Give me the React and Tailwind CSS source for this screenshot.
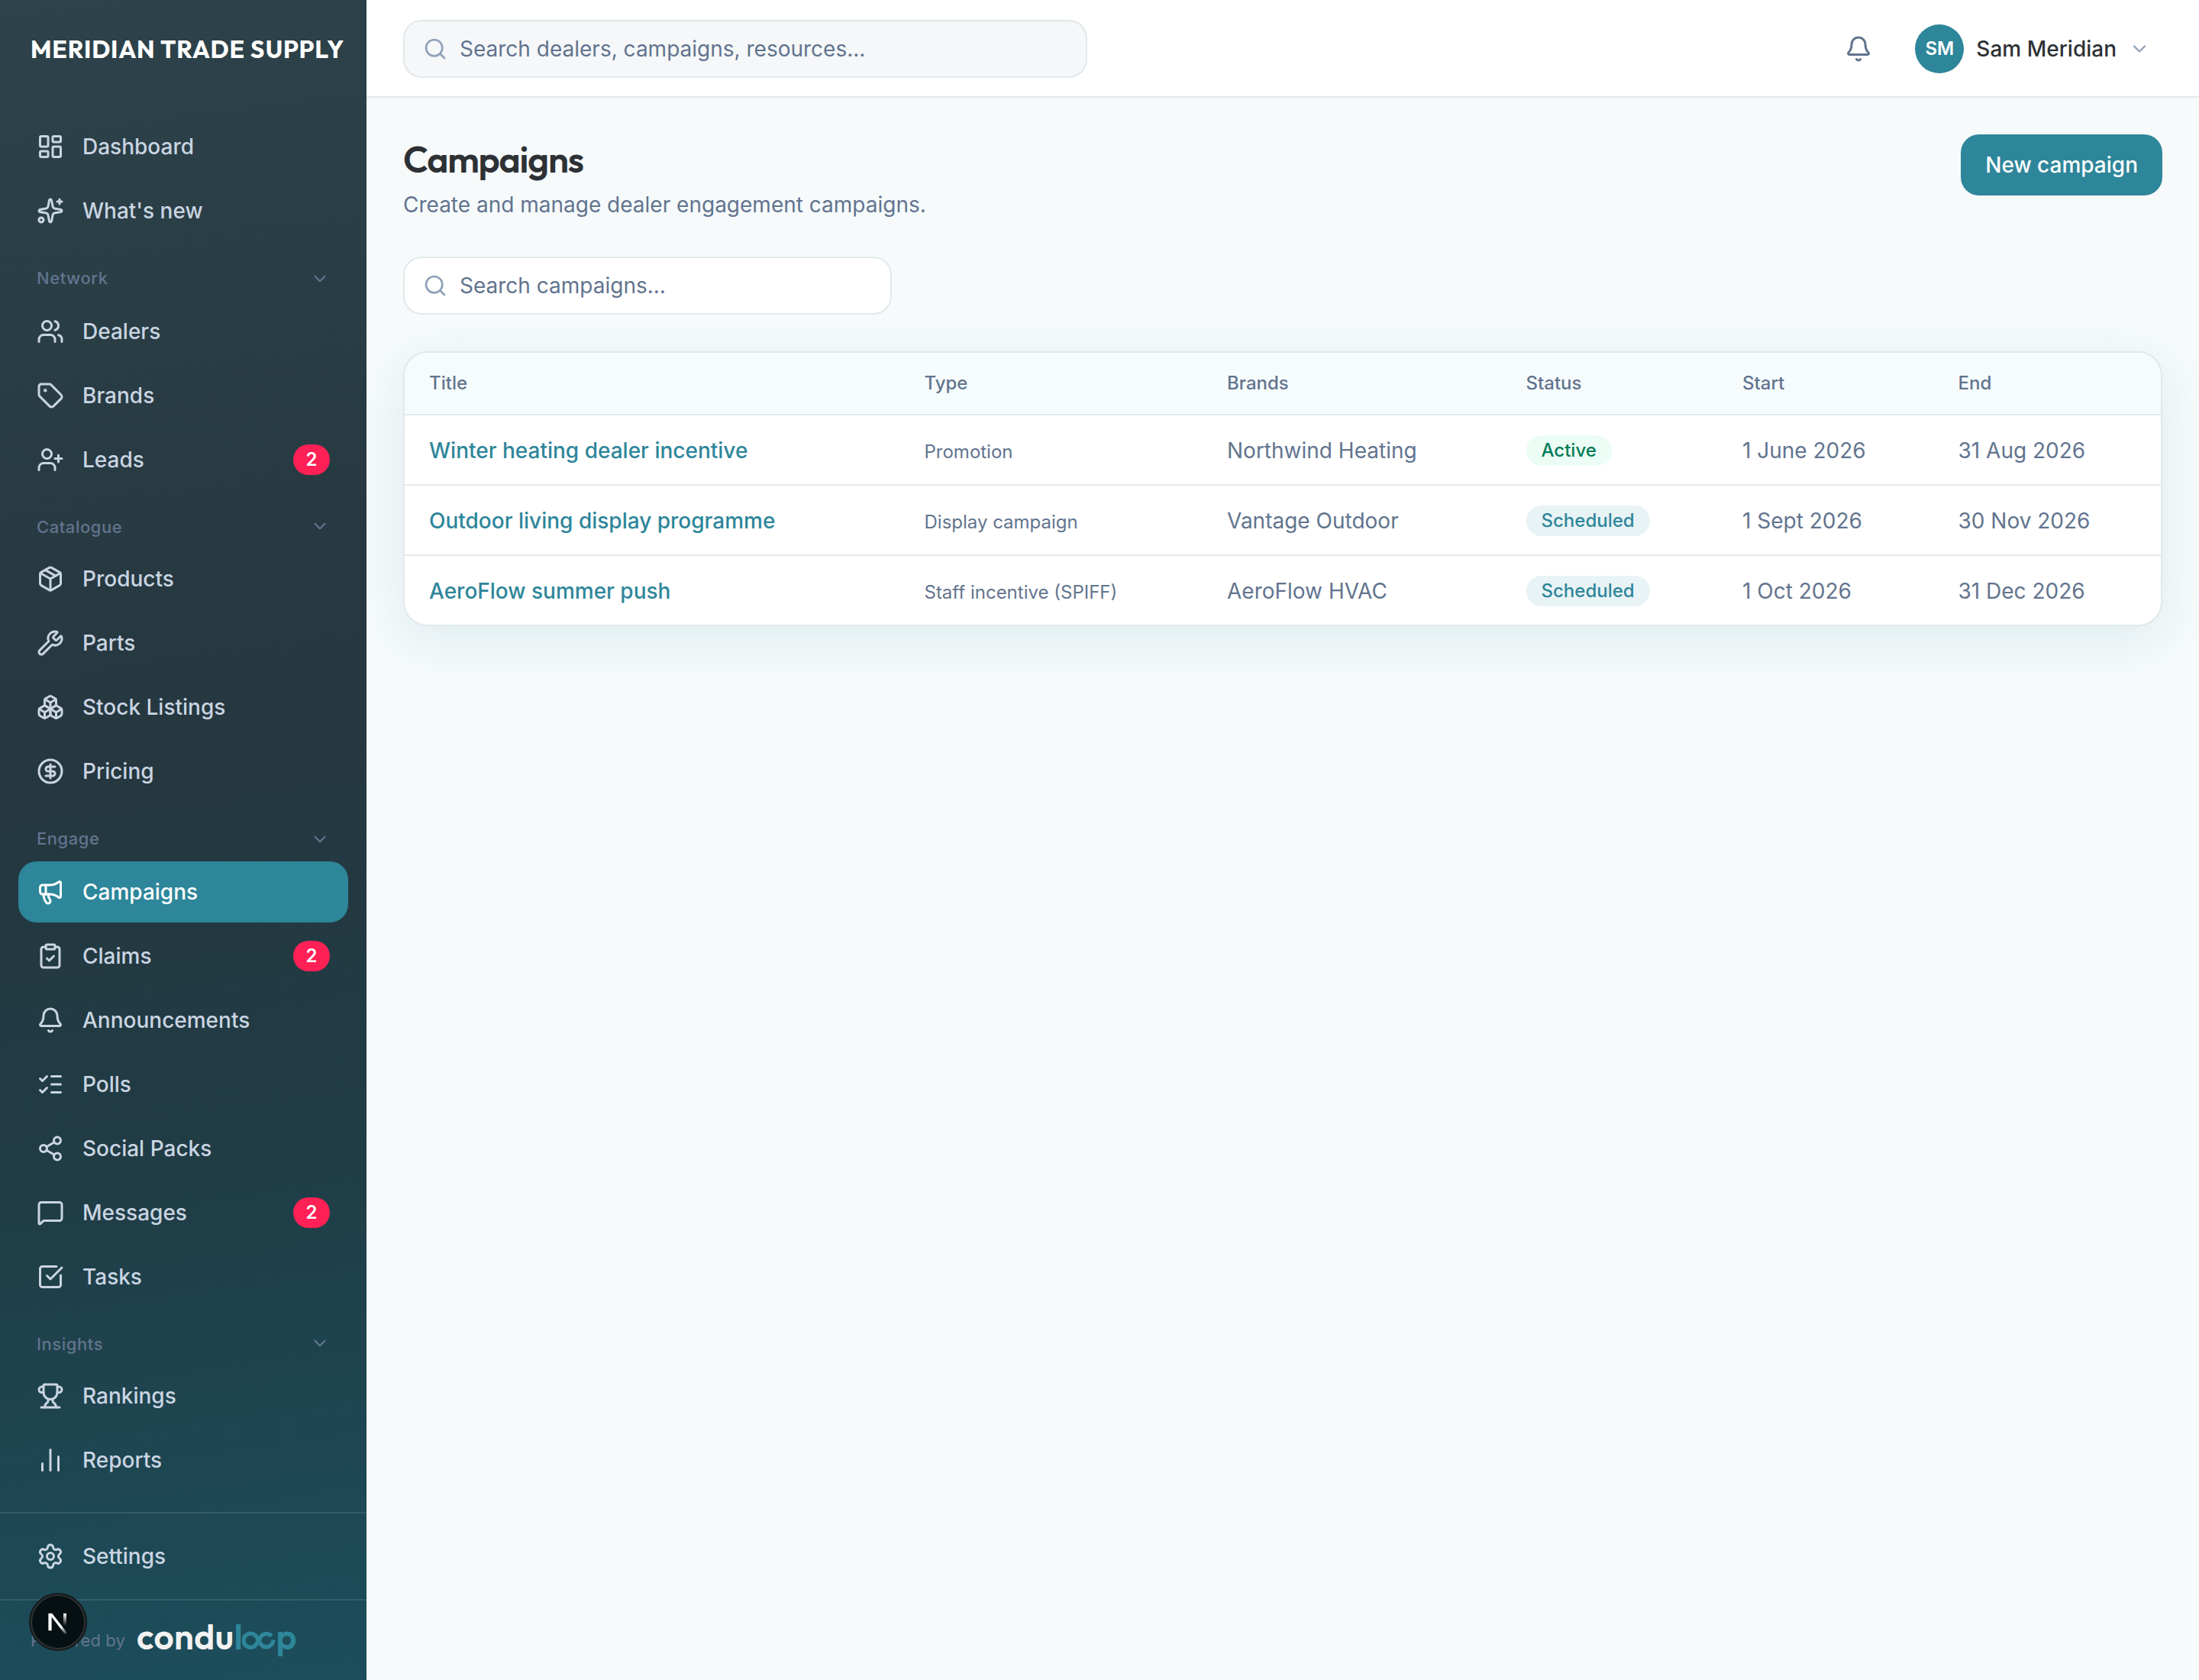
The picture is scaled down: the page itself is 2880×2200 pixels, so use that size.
import React from "react";
import {
  Bell,
  Boxes,
  ChartNoAxesColumn,
  ChevronDown,
  CircleDollarSign,
  ClipboardCheck,
  LayoutDashboard,
  ListChecks,
  Megaphone,
  MessageSquare,
  Package,
  Search,
  Settings,
  Share2,
  Sparkles,
  SquareCheckBig,
  Tag,
  Trophy,
  UserPlus,
  Users,
  Wrench,
} from "lucide-react";

const SECTIONS = [
  {
    items: [
      { label: "Dashboard", icon: LayoutDashboard },
      { label: "What's new", icon: Sparkles },
    ],
  },
  {
    title: "Network",
    header: "h-[78px] pt-[18px]",
    chevron: "translate-y-px",
    items: [
      { label: "Dealers", icon: Users },
      { label: "Brands", icon: Tag },
      { label: "Leads", icon: UserPlus, badge: 2 },
    ],
  },
  {
    title: "Catalogue",
    header: "h-[76px] pt-5",
    chevron: "-translate-y-px",
    items: [
      { label: "Products", icon: Package },
      { label: "Parts", icon: Wrench },
      { label: "Stock Listings", icon: Boxes },
      { label: "Pricing", icon: CircleDollarSign },
    ],
  },
  {
    title: "Engage",
    header: "h-[78px] pt-[18px]",
    chevron: "translate-y-px",
    items: [
      { label: "Campaigns", icon: Megaphone, active: true },
      { label: "Claims", icon: ClipboardCheck, badge: 2 },
      { label: "Announcements", icon: Bell },
      { label: "Polls", icon: ListChecks },
      { label: "Social Packs", icon: Share2 },
      { label: "Messages", icon: MessageSquare, badge: 2 },
      { label: "Tasks", icon: SquareCheckBig },
    ],
  },
  {
    title: "Insights",
    header: "h-[76px] pt-5",
    chevron: "-translate-y-px",
    items: [
      { label: "Rankings", icon: Trophy },
      { label: "Reports", icon: ChartNoAxesColumn },
    ],
  },
];

const CAMPAIGNS = [
  {
    title: "Winter heating dealer incentive",
    type: "Promotion",
    brand: "Northwind Heating",
    status: "Active",
    start: "1 June 2026",
    end: "31 Aug 2026",
  },
  {
    title: "Outdoor living display programme",
    type: "Display campaign",
    brand: "Vantage Outdoor",
    status: "Scheduled",
    start: "1 Sept 2026",
    end: "30 Nov 2026",
  },
  {
    title: "AeroFlow summer push",
    type: "Staff incentive (SPIFF)",
    brand: "AeroFlow HVAC",
    status: "Scheduled",
    start: "1 Oct 2026",
    end: "31 Dec 2026",
  },
];

const GRID = "grid grid-cols-[648.5px_396.5px_391.5px_283.5px_282.5px_1fr]";

const STATUS_STYLES = {
  Active: "bg-emerald-50 text-emerald-700",
  Scheduled: "bg-[#e8f3f5] text-[#2e869a]",
};

function NavItem({ label, icon: Icon, badge, active }) {
  return (
    <a
      className={
        "flex h-20 items-center gap-6 rounded-3xl px-6 text-[28px] leading-10 font-medium " +
        (active ? "bg-[#2e869a] text-white" : "text-slate-300")
      }
    >
      <Icon size={36} className="shrink-0" />
      <span className="flex-1">{label}</span>
      {badge && (
        <span className="flex h-10 w-12 items-center justify-center rounded-full bg-rose-500 text-2xl font-semibold text-white">
          {badge}
        </span>
      )}
    </a>
  );
}

function ConduloopLogo() {
  return (
    <span className="flex h-10 items-center font-['Outfit'] text-[46px] leading-10 font-semibold">
      <span className="-mt-2.5 tracking-[0.4px] text-[#f2f2f2]">condu</span>
      <span className="-mt-2.5 text-[#2e869a]">l</span>
      <svg
        width="44"
        height="40"
        viewBox="0 0 44 40"
        fill="none"
        stroke="#2e869a"
        strokeWidth="5.4"
        className="-ml-[0.4px]"
      >
        <path d="M38.6 14.4A9.1 9.1 0 0 0 25.4 14.4L18.2 26A9.1 9.1 0 1 1 18.2 14.4C20.4 17 23 23.4 25.4 26A9.1 9.1 0 0 0 40.9 19.4" />
      </svg>
      <span className="-mt-2.5 text-[#2e869a]">p</span>
    </span>
  );
}

function DevBadge() {
  return (
    <div className="absolute -top-[10px] left-[38px] flex size-[76px] items-center justify-center rounded-full border-2 border-[#171a1b] bg-[#060f11]">
      <div className="flex size-[72px] items-center justify-center rounded-full border-2 border-[#2c3335]">
        <svg width="40" height="40" viewBox="0 0 40 40" fill="none">
          <defs>
            <linearGradient id="stem" x1="0" y1="9" x2="0" y2="25" gradientUnits="userSpaceOnUse">
              <stop stopColor="#fff" />
              <stop offset="1" stopColor="#fff" stopOpacity="0" />
            </linearGradient>
            <linearGradient id="slash" x1="24" y1="26" x2="32" y2="37" gradientUnits="userSpaceOnUse">
              <stop stopColor="#fff" />
              <stop offset="1" stopColor="#fff" stopOpacity="0" />
            </linearGradient>
          </defs>
          <path d="M7.4 8.8H12.2L32.2 34.4L29.4 36.6L11.6 13.6V31.2H7.4Z" fill="url(#slash)" />
          <path d="M27 8.8H31V25H27Z" fill="url(#stem)" />
        </svg>
      </div>
    </div>
  );
}

function Sidebar() {
  return (
    <aside className="flex w-[480px] shrink-0 flex-col bg-[linear-gradient(172deg,#2d424a_0%,#25373f_45%,#203c45_68%,#1c4e5c_100%)]">
      <div className="flex h-32 items-center px-10 font-['Outfit'] text-[32px] font-bold tracking-wide whitespace-nowrap text-white">
        MERIDIAN TRADE SUPPLY
      </div>
      <nav className="flex-1 px-6 pt-6">
        {SECTIONS.map((section, i) => (
          <div key={i}>
            {section.title && (
              <div className={"flex items-center justify-between px-6 text-slate-500 " + section.header}>
                <span className="text-[22px] font-medium tracking-wide">{section.title}</span>
                <ChevronDown size={26} className={section.chevron} />
              </div>
            )}
            <div className="flex flex-col gap-1">
              {section.items.map((item) => (
                <NavItem key={item.label} {...item} />
              ))}
            </div>
          </div>
        ))}
      </nav>
      <div className="border-t-2 border-white/10 px-6 py-4">
        <NavItem label="Settings" icon={Settings} />
      </div>
      <div className="relative flex h-[106px] items-center gap-[15px] border-t-2 border-white/10 px-10">
        <span className="text-[22px] tracking-[0.1px] whitespace-nowrap text-slate-500">Powered by</span>
        <ConduloopLogo />
        <DevBadge />
      </div>
    </aside>
  );
}

function SearchBox({ placeholder, className }) {
  return (
    <div
      className={
        "flex h-[76px] items-center gap-4 rounded-3xl border-2 border-[#e2e8eb] px-6 text-[28px] text-slate-500 " +
        className
      }
    >
      <Search size={32} className="shrink-0 text-slate-400" />
      <span>{placeholder}</span>
    </div>
  );
}

function TopBar() {
  return (
    <header className="flex h-32 items-center border-b-2 border-[#e2e8eb] bg-white pt-0.5 pr-16 pl-12">
      <SearchBox placeholder="Search dealers, campaigns, resources..." className="w-[896px] bg-[#f5f7f9]" />
      <Bell size={36} className="ml-auto text-slate-500" />
      <div className="ml-14 flex items-center gap-4">
        <span className="flex size-16 items-center justify-center rounded-full bg-[#2e869a] text-2xl font-semibold text-white">
          SM
        </span>
        <span className="text-[28px] font-medium text-[#2d3135]">Sam Meridian</span>
        <ChevronDown size={28} className="text-slate-400" />
      </div>
    </header>
  );
}

function CampaignTable() {
  return (
    <div className="mt-12 overflow-hidden rounded-[32px] border-2 border-[#e2e8eb] bg-white text-[28px] text-slate-500 shadow-[0_16px_64px_rgba(46,134,154,0.12)]">
      <div className={GRID + " h-[82px] items-center border-b-2 border-[#e2e8eb] bg-[#f6fcfc] text-2xl font-medium"}>
        {["Title", "Type", "Brands", "Status", "Start", "End"].map((h) => (
          <div key={h} className="px-8">
            {h}
          </div>
        ))}
      </div>
      <div className="divide-y-2 divide-[#e2e8eb]">
        {CAMPAIGNS.map((c) => (
          <div key={c.title} className={GRID + " h-[92px] items-center pt-0.5 leading-10 last:h-[90px]"}>
            <div className="px-8 font-medium text-[#2e869a]">{c.title}</div>
            <div className="px-8 pt-[3px] text-2xl leading-10">{c.type}</div>
            <div className="px-8">{c.brand}</div>
            <div className="flex px-8">
              <span className={"rounded-full px-5 text-2xl leading-10 font-medium " + STATUS_STYLES[c.status]}>
                {c.status}
              </span>
            </div>
            <div className="px-8">{c.start}</div>
            <div className="px-8">{c.end}</div>
          </div>
        ))}
      </div>
    </div>
  );
}

export default function App() {
  return (
    <div className="flex h-[2200px] w-[2880px] overflow-hidden bg-[#f6fafb] font-['Inter',sans-serif] antialiased">
      <Sidebar />
      <div className="flex min-w-0 flex-1 flex-col">
        <TopBar />
        <main className="flex-1 p-12">
          <div className="flex items-start justify-between">
            <div>
              <h1 className="font-['Outfit'] text-5xl leading-16 font-semibold tracking-tight text-[#2d3135]">
                Campaigns
              </h1>
              <p className="mt-2 text-[28px] leading-10 text-slate-500">
                Create and manage dealer engagement campaigns.
              </p>
            </div>
            <button className="flex h-20 items-center rounded-3xl bg-[#2e869a] px-8 text-[28px] font-medium text-white">
              New campaign
            </button>
          </div>
          <SearchBox placeholder="Search campaigns..." className="mt-12 w-[640px] bg-white" />
          <CampaignTable />
        </main>
      </div>
    </div>
  );
}
